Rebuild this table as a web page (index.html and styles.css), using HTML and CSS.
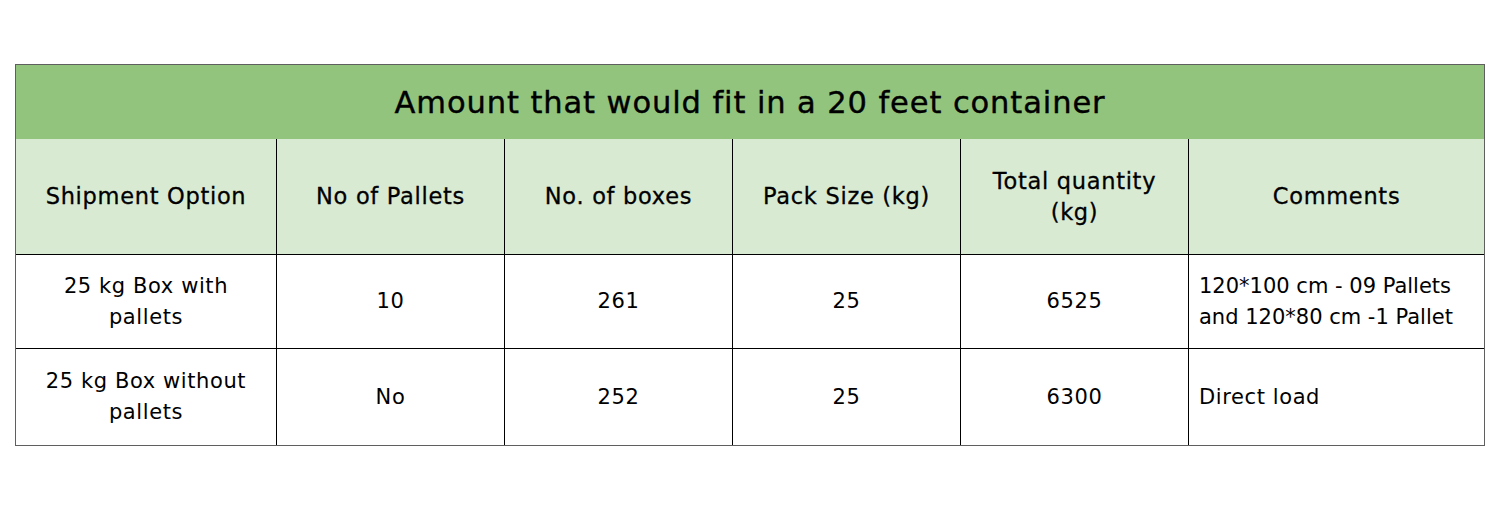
FILE: index.html
```html
<!DOCTYPE html>
<html>
<head>
<meta charset="utf-8">
<link rel="stylesheet" href="styles.css">
</head>
<body>
<table class="sheet">
  <colgroup>
    <col class="c1"><col class="c2"><col class="c3"><col class="c4"><col class="c5"><col class="c6">
  </colgroup>
  <tr class="title-row"><td colspan="6" class="title">Amount that would fit in a 20 feet container</td></tr>
  <tr class="head-row">
    <th>Shipment Option</th>
    <th>No of Pallets</th>
    <th>No. of boxes</th>
    <th>Pack Size (kg)</th>
    <th>Total quantity<br>(kg)</th>
    <th class="last">Comments</th>
  </tr>
  <tr class="row1">
    <td>25 kg Box with<br>pallets</td>
    <td>10</td>
    <td>261</td>
    <td>25</td>
    <td>6525</td>
    <td class="last left tight">120*100 cm - 09 Pallets<br>and 120*80 cm -1 Pallet</td>
  </tr>
  <tr class="row2">
    <td>25 kg Box without<br>pallets</td>
    <td>No</td>
    <td>252</td>
    <td>25</td>
    <td>6300</td>
    <td class="last left">Direct load</td>
  </tr>
</table>
</body>
</html>
```

FILE: styles.css
```css
html, body {
  margin: 0;
  padding: 0;
  background: #fff;
}
body {
  font-family: "DejaVu Sans", "Lato", sans-serif;
  color: #000;
}
.sheet {
  margin: 64px 0 0 15px;
  width: 1470px;
  table-layout: fixed;
  border-collapse: separate;
  border-spacing: 0;
  border: 1px solid #5f5f5f;
}
.c1 { width: 261px; }
.c2, .c3, .c4, .c5 { width: 228px; }
.c6 { width: 295px; }
td, th {
  padding: 0 10px;
  font-size: 21px;
  font-weight: 400;
  letter-spacing: 0.6px;
  line-height: 31px;
  text-align: center;
  vertical-align: middle;
  border-right: 1px solid #000;
}
td.last, th.last { border-right: none; }
.title {
  background: #93c47d;
  height: 74px;
  font-size: 30.5px;
  letter-spacing: 0.9px;
  -webkit-text-stroke: 0.4px #000;
  border-right: none;
}
.head-row th {
  background: #d9ead3;
  height: 115px;
  font-size: 22.5px;
  letter-spacing: 0.7px;
  -webkit-text-stroke: 0.3px #000;
}
.row1 td, .row2 td { border-top: 1px solid #000; }
.row1 td { height: 93px; }
.row2 td { height: 96px; }
.left { text-align: left; }
.tight { letter-spacing: 0; }
```
